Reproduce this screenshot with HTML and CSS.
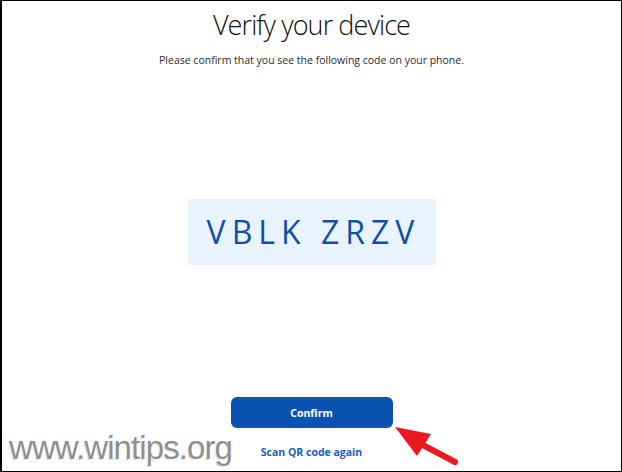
FILE: index.html
```html
<!DOCTYPE html>
<html>
<head>
<meta charset="utf-8">
<link rel="stylesheet" href="styles.css">
</head>
<body>
<div class="frame">
  <h1 class="title">Verify your device</h1>
  <p class="subtitle">Please confirm that you see the following code on your phone.</p>
  <div class="code">VBLK ZRZV</div>
  <button class="confirm">Confirm</button>
  <a class="scan">Scan QR code again</a>
  <div class="watermark">www.wintips.org</div>
  <svg class="arrow" width="70" height="50" viewBox="390 420 70 50">
    <line x1="419" y1="443" x2="455" y2="462" stroke="#e8191f" stroke-width="6" stroke-linecap="round"/>
    <polygon points="395,427 431,434 417,456" fill="#e8191f"/>
  </svg>
</div>
</body>
</html>
```
FILE: styles.css
```css
html, body { margin: 0; padding: 0; background: #fff; }
.frame {
  position: relative;
  width: 622px;
  height: 472px;
  box-sizing: border-box;
  border: 1px solid #000;
  border-left-width: 2px;
  display: flex;
  flex-direction: column;
  align-items: center;
  font-family: "Open Sans", "Noto Sans", sans-serif;
  overflow: hidden;
}
.title {
  margin: 6px 0 0;
  font-size: 27px;
  font-weight: 300;
  line-height: 36px;
  color: #111;
  letter-spacing: -0.9px;
}
.subtitle {
  margin: 10px 0 0;
  font-size: 10.5px;
  line-height: 14px;
  color: #2b2b2b;
}
.code {
  margin-top: 132px;
  width: 248px;
  height: 66px;
  box-sizing: border-box;
  background: #e9f3fe;
  color: #1250a8;
  font-size: 32px;
  letter-spacing: 6px;
  line-height: 66px;
  text-align: center;
  padding-left: 4px;
}
.confirm {
  margin-top: 132px;
  width: 162px;
  height: 31px;
  border: none;
  border-radius: 6px;
  background: #0b53b0;
  color: #fff;
  font-family: "Open Sans", sans-serif;
  font-weight: 700;
  font-size: 10.5px;
}
.scan {
  margin-top: 17px;
  font-size: 10.5px;
  font-weight: 700;
  color: #1462b8;
}
.watermark {
  position: absolute;
  left: 7px;
  top: 428px;
  font-family: "Liberation Sans", Arial, sans-serif;
  font-size: 33px;
  color: #8f8f8f;
  letter-spacing: -0.9px;
  text-shadow: 1px 1px 0 #fff, -1px -1px 0 #fff, 1px -1px 0 #fff, -1px 1px 0 #d0d0d0;
}
.arrow {
  position: absolute;
  left: 388px;
  top: 419px;
}
```
